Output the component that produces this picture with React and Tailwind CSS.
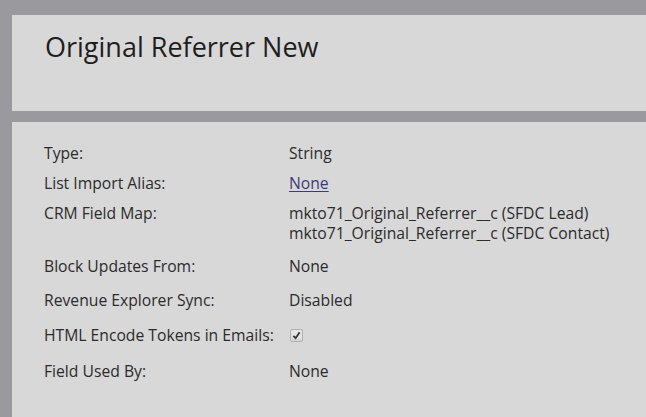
export default function App() {
  const font = { fontFamily: '"Open Sans", "Noto Sans", sans-serif' };
  return (
    <div className="min-h-[417px] w-[646px] bg-[#9a999d] pt-[15px] pl-[12px] overflow-hidden" style={font}>
      <div className="h-[96px] bg-[#d8d8d8] pl-[33px] pt-[15px]">
        <h1 className="text-[27px] leading-[34px] text-[#1e1e1e] font-normal">Original Referrer New</h1>
      </div>
      <div className="mt-[11px] h-[300px] bg-[#d8d8d8] pl-[32px] pt-[21px] text-[15.7px] leading-[20px] text-[#2b2b2b]">
        <div className="flex">
          <div className="w-[245px]">Type:</div>
          <div>String</div>
        </div>
        <div className="flex mt-[10px]">
          <div className="w-[245px]">List Import Alias:</div>
          <div className="text-[#3b3b78] underline underline-offset-2">None</div>
        </div>
        <div className="flex mt-[10px]">
          <div className="w-[245px]">CRM Field Map:</div>
          <div>
            <div>mkto71_Original_Referrer__c (SFDC Lead)</div>
            <div>mkto71_Original_Referrer__c (SFDC Contact)</div>
          </div>
        </div>
        <div className="flex mt-[13px]">
          <div className="w-[245px]">Block Updates From:</div>
          <div>None</div>
        </div>
        <div className="flex mt-[14px]">
          <div className="w-[245px]">Revenue Explorer Sync:</div>
          <div>Disabled</div>
        </div>
        <div className="flex mt-[15px] items-center">
          <div className="w-[245px]">HTML Encode Tokens in Emails:</div>
          <div className="ml-[1px] w-[13px] h-[13px] rounded-[2px] border border-[#b0b0b0] bg-[#e6e6e6] shadow-[inset_0_-2px_2px_rgba(0,0,0,0.08)] flex items-center justify-center">
            <svg width="9" height="9" viewBox="0 0 10 10">
              <path d="M1.5 5.5 L4 8 L8.5 1.5" fill="none" stroke="#333" strokeWidth="2" />
            </svg>
          </div>
        </div>
        <div className="flex mt-[16px]">
          <div className="w-[245px]">Field Used By:</div>
          <div>None</div>
        </div>
      </div>
    </div>
  );
}
